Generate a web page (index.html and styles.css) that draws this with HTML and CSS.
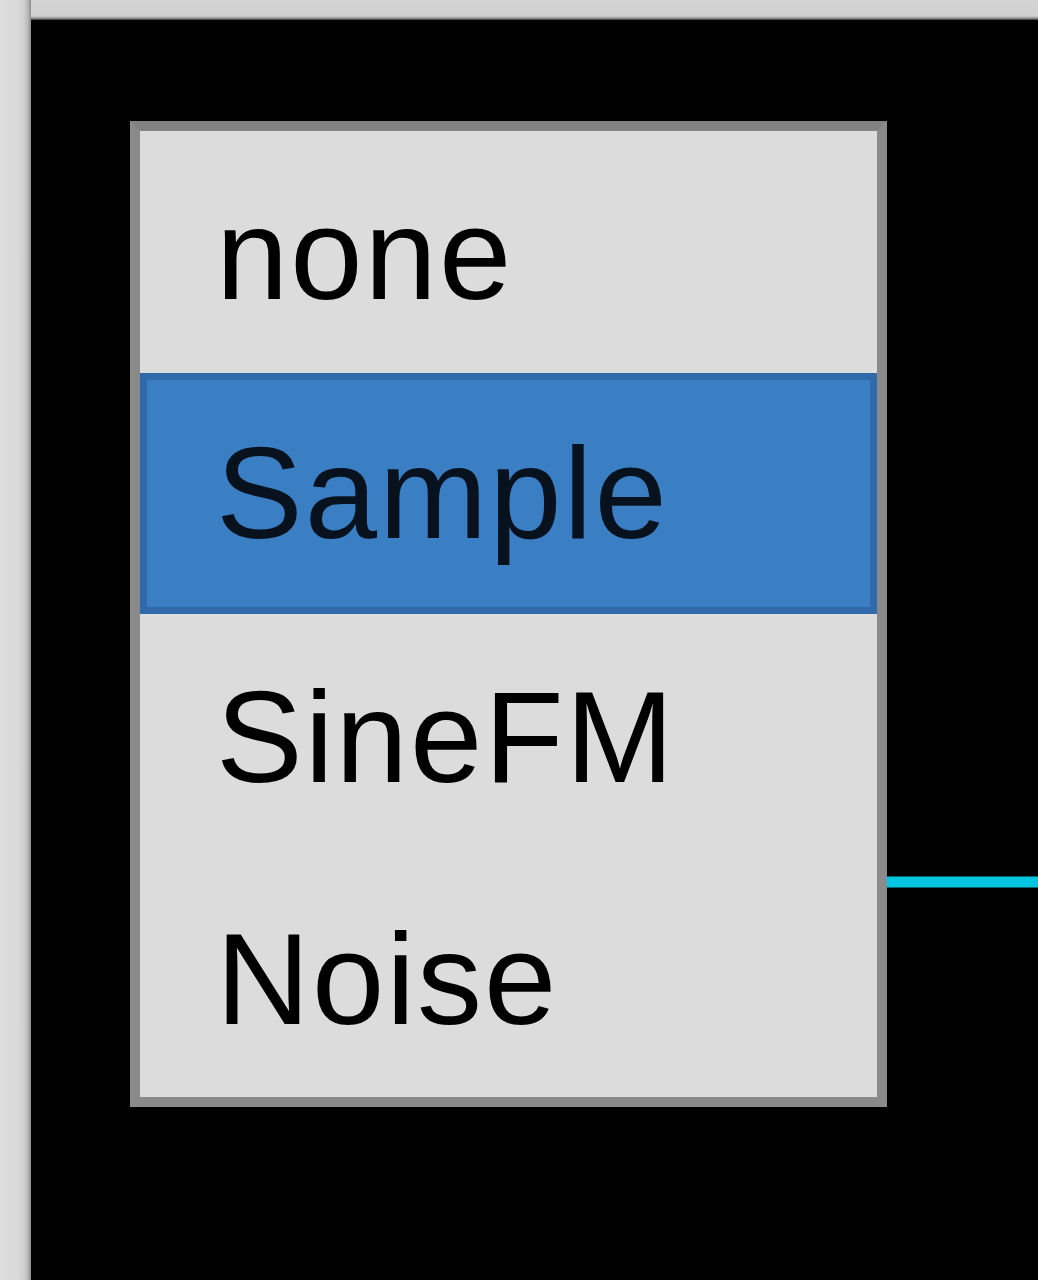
FILE: index.html
```html
<!DOCTYPE html>
<html lang="en">
<head>
<meta charset="utf-8">
<title>Source menu</title>
<link rel="stylesheet" href="styles.css">
</head>
<body>
<div class="window">
  <div class="side-strip"></div>
  <div class="main">
    <div class="top-strip"></div>
    <div class="canvas">
      <svg class="scope" width="1007" height="1260" viewBox="0 0 1007 1260" aria-hidden="true">
        <line x1="840" y1="862" x2="1007" y2="862" stroke="#00c6e2" stroke-width="11"/>
      </svg>
      <ul class="menu">
        <li class="menu-item">none</li>
        <li class="menu-item selected">Sample</li>
        <li class="menu-item">SineFM</li>
        <li class="menu-item">Noise</li>
      </ul>
    </div>
  </div>
</div>
</body>
</html>
```
FILE: styles.css
```css
html, body {
  margin: 0;
  padding: 0;
  background: #d6d6d6;
  overflow: hidden;
}

.window {
  display: flex;
  width: 1038px;
  height: 1280px;
}

.side-strip {
  width: 31px;
  flex: none;
  background: linear-gradient(to right, #dedede 0, #d9d9d9 18px, #cfcfcf 24px, #b8b8b8 28px, #8a8a8a 31px);
}

.main {
  flex: 1;
  display: flex;
  flex-direction: column;
}

.top-strip {
  height: 20px;
  flex: none;
  background: linear-gradient(to bottom, #d4d4d4 0, #d1d1d1 16px, #9a9a9a 18px, #3a3a3a 20px);
}

.canvas {
  flex: 1;
  position: relative;
  background: #000;
  overflow: hidden;
}

.scope {
  display: block;
}

.menu {
  position: absolute;
  left: 99px;
  top: 101px;
  width: 737px;
  margin: 0;
  padding: 0;
  list-style: none;
  background: #dcdcdc;
  border: 10px solid #8a8a8a;
  border-top-color: #828282;
  font-family: "Liberation Sans", Arial, sans-serif;
  font-size: 130px;
  letter-spacing: 2px;
  color: #000;
}

.menu-item {
  box-sizing: border-box;
  height: 241.5px;
  padding: 7px 0 0 76px;
  line-height: 232px;
  white-space: nowrap;
}

.menu-item.selected {
  background: #3a7fc4;
  border: 7px solid #306aaa;
  padding: 0 0 0 69px;
  color: #08121f;
  line-height: 226px;
}
```
